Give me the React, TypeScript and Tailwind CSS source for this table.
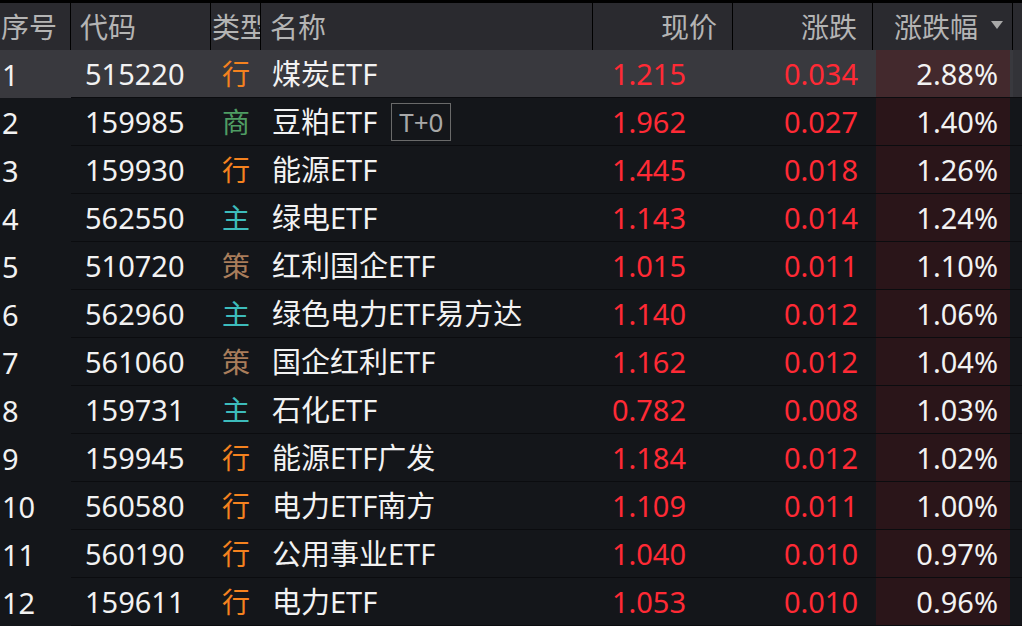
import React from "react";

type Row = {
  code: string;
  kind: "行" | "商" | "主" | "策";
  name: string;
  t0?: boolean;
  price: string;
  chg: string;
  pct: string;
};

const ROWS: Row[] = [
  { code: "515220", kind: "行", name: "煤炭ETF", price: "1.215", chg: "0.034", pct: "2.88%" },
  { code: "159985", kind: "商", name: "豆粕ETF", t0: true, price: "1.962", chg: "0.027", pct: "1.40%" },
  { code: "159930", kind: "行", name: "能源ETF", price: "1.445", chg: "0.018", pct: "1.26%" },
  { code: "562550", kind: "主", name: "绿电ETF", price: "1.143", chg: "0.014", pct: "1.24%" },
  { code: "510720", kind: "策", name: "红利国企ETF", price: "1.015", chg: "0.011", pct: "1.10%" },
  { code: "562960", kind: "主", name: "绿色电力ETF易方达", price: "1.140", chg: "0.012", pct: "1.06%" },
  { code: "561060", kind: "策", name: "国企红利ETF", price: "1.162", chg: "0.012", pct: "1.04%" },
  { code: "159731", kind: "主", name: "石化ETF", price: "0.782", chg: "0.008", pct: "1.03%" },
  { code: "159945", kind: "行", name: "能源ETF广发", price: "1.184", chg: "0.012", pct: "1.02%" },
  { code: "560580", kind: "行", name: "电力ETF南方", price: "1.109", chg: "0.011", pct: "1.00%" },
  { code: "560190", kind: "行", name: "公用事业ETF", price: "1.040", chg: "0.010", pct: "0.97%" },
  { code: "159611", kind: "行", name: "电力ETF", price: "1.053", chg: "0.010", pct: "0.96%" },
];

const KIND_COLOR: Record<Row["kind"], string> = {
  行: "text-[#f5821f]",
  商: "text-[#4f9d63]",
  主: "text-[#3dbcbc]",
  策: "text-[#a97d5b]",
};

const COLS = "grid grid-cols-[71px_140px_50px_332px_140px_140px_140px_9px]";

export default function App() {
  return (
    <div
      className="w-[1022px] h-[626px] overflow-hidden bg-[#14161a] text-[29px] leading-none"
      style={{ fontFamily: '"Noto Sans", "Noto Sans CJK SC", sans-serif' }}
    >
      {/* 表头 */}
      <div className={`${COLS} h-[50px] border-t-[3px] border-black bg-[#2a2a2f] text-[28px] text-[#b4b4b4]`}>
        <div className="flex items-center overflow-hidden border-r border-black pl-[1px]">序号</div>
        <div className="flex items-center border-r border-black pl-[9px]">代码</div>
        <div className="flex items-center overflow-hidden whitespace-nowrap border-r border-black pl-[1px]">类型</div>
        <div className="flex items-center border-r border-black pl-[9px]">名称</div>
        <div className="flex items-center justify-end border-r border-black pr-[15px]">现价</div>
        <div className="flex items-center justify-end border-r border-black pr-[15px]">涨跌</div>
        <div className="flex items-center justify-end gap-[13px] border-r border-black pr-[9px]">
          <span>涨跌幅</span>
          <svg width="12" height="8" viewBox="0 0 12 8" className="mt-[-4px]">
            <path d="M0 0H12L6 8Z" fill="#a8a8a8" />
          </svg>
        </div>
        <div />
      </div>

      {/* 行 */}
      {ROWS.map((r, i) => {
        const hi = i === 0;
        return (
          <div key={r.code} className={`${COLS} h-[48px] ${hi ? "bg-[#39393e]" : "bg-[#14161a]"}`}>
            <div className="flex items-center pl-[2px] text-[#f2f2f2]">{i + 1}</div>
            <div className="flex items-center border-b border-[#0b0c0f] pl-[14px] text-[#f2f2f2]">{r.code}</div>
            <div
              className={`flex items-center justify-center border-b border-[#0b0c0f] text-[28px] ${KIND_COLOR[r.kind]}`}
            >
              {r.kind}
            </div>
            <div className="flex items-center gap-[14px] border-b border-[#0b0c0f] pl-[11px] text-[#f2f2f2]">
              <span>{r.name}</span>
              {r.t0 && (
                <span className="flex h-[38px] w-[60px] items-center justify-center border border-[#6a6a6a] text-[26px] text-[#a8a8a8]">
                  T+0
                </span>
              )}
            </div>
            <div className="flex items-center justify-end border-b border-[#0b0c0f] pr-[47px] text-[#ff2a35]">
              {r.price}
            </div>
            <div className="flex items-center justify-end border-b border-[#0b0c0f] pr-[15px] text-[#ff2a35]">
              {r.chg}
            </div>
            <div className="flex border-b border-[#0b0c0f] pl-[3px] pr-[3px]">
              <div
                className={`flex flex-1 items-center justify-end pr-[12px] text-[#f2f2f2] ${
                  hi ? "bg-[#43292d]" : "bg-[#2a1519]"
                }`}
              >
                {r.pct}
              </div>
            </div>
            <div className={`border-b border-[#0b0c0f] ${hi ? "bg-[#333338]" : ""}`} />
          </div>
        );
      })}
    </div>
  );
}
